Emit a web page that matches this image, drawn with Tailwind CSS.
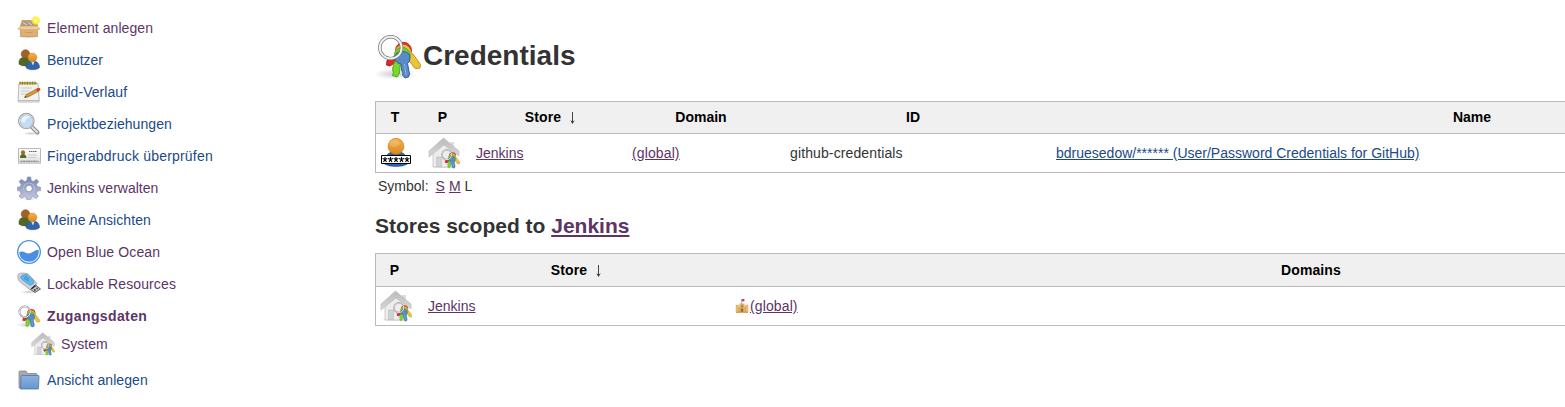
<!DOCTYPE html>
<html lang="de">
<head>
<meta charset="utf-8">
<title>Credentials [Jenkins]</title>
<script src="https://cdn.jsdelivr.net/npm/@tailwindcss/browser@4"></script>
</head>
<body class="h-[407px] overflow-hidden bg-white font-['Liberation_Sans',Arial,sans-serif] text-[14px] leading-[16px] text-[#333]">
<svg class="absolute size-0" aria-hidden="true">
  <defs>
    <linearGradient id="orange" x1="0" y1="0" x2="0" y2="1"><stop offset="0" stop-color="#f3b04c"/><stop offset="1" stop-color="#d98a1e"/></linearGradient>
    <linearGradient id="blue" x1="0" y1="0" x2="0" y2="1"><stop offset="0" stop-color="#3465a4"/><stop offset="1" stop-color="#2d66ad"/></linearGradient>
    <linearGradient id="roof" x1="0" y1="0" x2="0" y2="1"><stop offset="0" stop-color="#bbb"/><stop offset="1" stop-color="#d8d8d8"/></linearGradient>
    <linearGradient id="fold" x1="0" y1="0" x2="0" y2="1"><stop offset="0" stop-color="#8cb2df"/><stop offset="1" stop-color="#6795cc"/></linearGradient>
    <linearGradient id="card" x1="0" y1="0" x2="0" y2="1"><stop offset="0" stop-color="#fff"/><stop offset="1" stop-color="#ddd"/></linearGradient>
    <linearGradient id="gearfill" x1="0" y1="0" x2="0" y2="1"><stop offset="0" stop-color="#7184ad"/><stop offset="1" stop-color="#c9c9e0"/></linearGradient>
    <radialGradient id="shade"><stop offset="0" stop-color="#000" stop-opacity=".2"/><stop offset="1" stop-color="#000" stop-opacity="0"/></radialGradient>
    <radialGradient id="glow"><stop offset="0" stop-color="#fffbb0"/><stop offset=".6" stop-color="#fbee3c"/><stop offset="1" stop-color="#fbee3c" stop-opacity="0"/></radialGradient>
  </defs>
  <symbol id="keyring" viewBox="0 0 48 48">
    <path d="M19 25l2 5-6 4-3.500-1 .5-4.500z" fill="#dd2b2b" stroke="#a40000" stroke-width=".8"/>
    <circle cx="28.500" cy="18.300" r="8" fill="#dd3b2b" stroke="#b31414" stroke-width=".8"/>
    <path d="M32 21l6 1 7.500 10.500-.5 3.500-4 .5-2-1-2-3-5-6z" fill="#e8c53a" stroke="#b98e16" stroke-width=".9"/>
    <circle cx="28" cy="20.800" r="8" fill="#f2c53c"/>
    <circle cx="27.200" cy="23.300" r="8" fill="#6fd02c" stroke="#4b9a0c" stroke-width=".7"/>
    <path d="M20.500 28l5 2-1 11-2.500 4-4.500-1.500 1-3-1-3 1-5z" fill="#78d830" stroke="#4e9a06" stroke-width=".9"/>
    <path d="M20 26q0-6.500 7.300-6.500 7.700 0 7.700 6.500 0 4-2.500 5.500l2 10.500-1 3-3.500 1-2.500-3 .5-2-1.500-3-.5-6q-6-1-6-6z" fill="#5a8bc9" stroke="#32609c" stroke-width="1"/>
    <path d="M29.500 32l1.700 11" stroke="#8fb3de" stroke-width="1"/>
    <circle cx="15.700" cy="15.700" r="10.900" fill="none" stroke="#777" stroke-width="3.400"/>
    <circle cx="15.700" cy="15.700" r="10.900" fill="none" stroke="#f0f0f0" stroke-width="2"/>
    <path d="M20.500 13q2-1.500 4 0v6h-2z" fill="none"/>
  </symbol>
  <symbol id="keys" viewBox="0 0 48 48">
    <ellipse cx="20" cy="42" rx="21" ry="5.500" fill="url(#shade)"/>
    <use href="#keyring" width="48" height="48"/>
  </symbol>
  <symbol id="home" viewBox="0 0 32 32">
    <ellipse cx="15" cy="29.500" rx="14" ry="2" fill="url(#shade)"/>
    <path d="M5 14L16 5l10 9v16H5z" fill="#ededed" stroke="#c4c4c4" stroke-width=".8"/>
    <path d="M22 5h4v7h-4z" fill="#ddd"/>
    <path d="M8.500 20h5v9.500h-5z" fill="#d2d2d2" stroke="#bbb" stroke-width=".6"/>
    <path d="M15.500 1L31 14v5L16 8 1 20v-6z" fill="url(#roof)" stroke="#bdbdbd" stroke-width=".7"/>
    <use href="#keyring" x="12" y="11" width="21" height="21"/>
  </symbol>
  <symbol id="people" viewBox="0 0 24 24">
    <ellipse cx="15" cy="21.500" rx="7" ry="1.500" fill="url(#shade)"/>
    <path d="M2 16q-.5-6 4-6.500h5q4 1 4 6.500-1 2-6 2t-7-2z" fill="#4e6b1e" stroke="#3b5213" stroke-width=".5"/>
    <circle cx="8.500" cy="6" r="4.300" fill="#9d6426" stroke="#764817" stroke-width=".5"/>
    <path d="M9 19.500q-.5-5 4-6.500h5q4.500 1.500 4.500 6.500-1.500 2-6.700 2t-6.800-2z" fill="url(#blue)" stroke="#204a87" stroke-width=".5"/>
    <path d="M14 13h3.500l-1.500 4.500z" fill="#e8eef6"/>
    <circle cx="15.400" cy="9.500" r="4.500" fill="url(#orange)" stroke="#c27c1c" stroke-width=".4"/>
  </symbol>
  <symbol id="box" viewBox="0 0 24 24">
    <ellipse cx="11.500" cy="21" rx="10" ry="1.700" fill="url(#shade)"/>
    <path d="M5 4.500h14.500l1 6H3.500z" fill="#c99a5e" stroke="#b98a50" stroke-width=".6"/>
    <path d="M5.500 6h12v4h-12z" fill="#a39c90"/><path d="M6 6.500l4 2.500M11 6.500l4 2.500" stroke="#d8d4cc"/>
    <path d="M3.500 10h17v10.500h-17z" fill="#deb073" stroke="#c28f54" stroke-width=".7"/>
    <path d="M4 10h16l3 3-3.500.800H4L.8 13z" fill="#efcd9b" stroke="#c99b60" stroke-width=".6"/>
    <path d="M8.500 16.500h7" stroke="#c99b60"/>
    <circle cx="18.800" cy="4.500" r="5" fill="url(#glow)"/>
  </symbol>
  <symbol id="note" viewBox="0 0 24 24">
    <path d="M2 3.500h19l1.300 17.500q0 1-1 1H2q-1 0-1-1z" fill="#f1f1ef" stroke="#aaa" stroke-width=".8"/>
    <path d="M1 20.500h21" stroke="#bbb"/>
    <path d="M2.500 2h17v2.500h-17z" fill="#b5a642"/><path d="M3 1.500v3M5.500 1.500v3M8 1.500v3M10.500 1.500v3M13 1.500v3M15.500 1.500v3M18 1.500v3" stroke="#8f8130"/>
    <path d="M4 8h11M4 11h9M4 14h7" stroke="#c8c8c8" stroke-width="1"/>
    <path d="M7.500 17.500l2-3L20.500 8.500l1.500 2.500-11 6z" fill="#d59a3c" stroke="#8f5902" stroke-width=".6"/>
    <path d="M19 9.200l3-1.500q1.500.3 1.500 2.300l-3 1.700z" fill="#dc3b2b"/><path d="M7.500 17.500l1-1.500 1 1z" fill="#222"/>
  </symbol>
  <symbol id="lens" viewBox="0 0 24 24">
    <ellipse cx="14" cy="21.500" rx="8" ry="1.800" fill="url(#shade)"/>
    <path d="M14.500 14.500l6 6" stroke="#888" stroke-width="4" stroke-linecap="round"/><path d="M14.500 14.500l5.700 5.700" stroke="#ddd" stroke-width="2.200" stroke-linecap="round"/>
    <circle cx="9.300" cy="9" r="7.300" fill="#c3dcf5" stroke="#999" stroke-width="2"/>
    <circle cx="9.300" cy="9" r="6.900" fill="none" stroke="#e8e8e8" stroke-width=".9"/>
    <path d="M4 9q1-5 6-5.300 2 0 3.500 1.300Q9 6 7.500 11z" fill="#e8f3fd"/>
  </symbol>
  <symbol id="idcard" viewBox="0 0 24 24">
    <path d="M1.500 4.500h22v15h-22z" fill="url(#card)" stroke="#aaa" stroke-width=".8"/>
    <path d="M1.500 17h22v3h-22z" fill="#d0d0d0"/><path d="M3.500 17.200h18" stroke="#777" stroke-dasharray="2 .5"/>
    <path d="M3 14q0-4 3-4t3.500 4z" fill="#4e6b1e"/><circle cx="6" cy="8.400" r="2.100" fill="#a06a2b"/>
    <path d="M12 7.500h8" stroke="#666" stroke-width="1.200" stroke-dasharray="1.500 .5"/><path d="M11 11h9M11 13.500h8" stroke="#ccc"/>
  </symbol>
  <symbol id="gear" viewBox="0 0 24 24">
    <ellipse cx="12" cy="22.500" rx="9" ry="1.500" fill="url(#shade)"/>
    <path d="M10.500 1h3.200l.5 3.500 2.300 1L19.500 3.200l2.200 2.300L19.500 8.500l1 2.300 3.200.5v3.200l-3.300.6-1 2.300 2 2.900-2.200 2.100-3-1.900-2.300 1-.5 2.300h-3.200L9.600 21.500l-2.300-1-3 1.900L2 20.200l2-2.900-1-2.200-2.800-.5v-3.300l3-.5 1-2.300-2.100-3L4.400 3.200 7.500 5.500l2.400-1z" fill="url(#gearfill)" stroke="#8f95b8" stroke-width=".7"/>
    <circle cx="12" cy="12.500" r="5.500" fill="none" stroke="#b4bbd5" stroke-width="1.200"/>
    <circle cx="12" cy="12.500" r="3.300" fill="#fff" stroke="#7d8bb0" stroke-width=".8"/>
  </symbol>
  <symbol id="ocean" viewBox="0 0 24 24">
    <circle cx="12" cy="12" r="11.300" fill="#fff" stroke="#4a90e2" stroke-width="1.300"/>
    <path d="M2.300 12q3-1.200 6 .5t5.500.5 4-2.300q1.500-1 3.900-.6.3 5.900-3 9.100-2.700 2.500-6.700 2.500-4.200 0-7-2.700Q2.200 16.300 2.300 12z" fill="#4a90e2"/>
  </symbol>
  <symbol id="usb" viewBox="0 0 24 24">
    <ellipse cx="12" cy="20" rx="9" ry="2" fill="url(#shade)"/>
    <path d="M.8 3.500q0-2 3-2.300 4-.6 7.500.8L20 11.500l-6.500 6.500L2.500 9.500Q.5 7.500.8 3.500z" fill="#d0d0da" stroke="#a0a0a8" stroke-width=".8"/>
    <path d="M3.500 5Q5 2.300 10 2.500l7 6.700q0 3.500-4.500 3.800L5 7.500z" fill="#5fbaec" stroke="#3a90c8" stroke-width=".7"/>
    <path d="M8 4l4 3.500M7 6l4.500 3" stroke="#2873b5" stroke-width=".8"/>
    <path d="M13.500 17.500l5-4.500 5 4-5.500 3.500z" fill="#c0c0c0" stroke="#444" stroke-width=".8"/><path d="M14.500 16.800l4-3.300M17 18h1.500M19.500 16.500h1.200" stroke="#222" stroke-width="1.300"/>
  </symbol>
  <symbol id="folder" viewBox="0 0 24 24">
    <path d="M2 20V4q0-1 1-1h6l1.500 2.500H19q1 0 1 1V20z" fill="#aaa" stroke="#888" stroke-width=".8"/>
    <path d="M3.500 21l.5-12.500q0-1 1-1H21.500q.6 0 .5 1l-.500 12q0 .5-.7.500z" fill="url(#fold)" stroke="#4a78b3" stroke-width=".8"/>
  </symbol>
  <symbol id="secret" viewBox="0 0 32 32">
    <path d="M4.500 27q0-10 7-12h9q7 2 7 12-4 2.500-11.500 2.500T4.500 27z" fill="url(#blue)" stroke="#204a87" stroke-width=".6"/>
    <circle cx="16" cy="9.300" r="8" fill="url(#orange)" stroke="#c27c18" stroke-width=".6"/>
    <ellipse cx="14.500" cy="6.500" rx="5" ry="3.500" fill="#fff" opacity=".17"/>
    <path d="M1.500 18.500h29v8h-29z" fill="#fff" stroke="#000" stroke-width="1"/>
    <g fill="none" stroke="#000" stroke-width="1.100"><path id="ast" d="M5 20v2.500M2.600 21.500l2.400 1 2.400-1M3.500 25l1.500-2.500L6.500 25"/><use href="#ast" x="5.500"/><use href="#ast" x="11"/><use href="#ast" x="16.500"/><use href="#ast" x="22"/></g>
  </symbol>
  <symbol id="castle" viewBox="0 0 14 14">
    <path d="M6.800 0h2.600v2.400H6.800z" fill="#e0394a"/><path d="M6.500 0v5" stroke="#999" stroke-width=".7"/>
    <path d="M4.500 4.500h5v3H13v6H1v-6h3.500z" fill="#dfae60"/><path d="M1 6h2.500v7.500H1zM10.500 6H13v7.500h-2.500z" fill="#e8bd75" stroke="#d09c50" stroke-width=".4"/>
    <path d="M5.800 13v-3q1.200-1.500 2.400 0v3z" fill="#9a6d30"/><path d="M6 6.500h2V8H6z" fill="#8a7d60"/><path d="M1 13.200h12" stroke="#c99748"/>
  </symbol>
  <symbol id="down" viewBox="0 0 8 14">
    <path d="M4.500 1v11" stroke="#444" stroke-width="1"/><path d="M2.300 9.300l2.200 3.700 2.200-3.700-2.200 1.200z" fill="#333"/>
  </symbol>
</svg>

<div class="flex w-full overflow-hidden">
  <nav class="flex w-[375px] shrink-0 flex-col pt-[16px] pl-[17px] text-[#5c3566]">
    <a class="flex h-8 gap-[6px] leading-6 tracking-[0.06px]"><svg class="size-6"><use href="#box"/></svg>Element anlegen</a>
    <a class="flex h-8 gap-[6px] leading-6 text-[#204a87]"><svg class="size-6"><use href="#people"/></svg>Benutzer</a>
    <a class="flex h-8 gap-[6px] leading-6 tracking-[0.06px] text-[#204a87]"><svg class="size-6"><use href="#note"/></svg>Build-Verlauf</a>
    <a class="flex h-8 gap-[6px] leading-6 tracking-[0.06px] text-[#204a87]"><svg class="size-6"><use href="#lens"/></svg>Projektbeziehungen</a>
    <a class="flex h-8 gap-[6px] leading-6 tracking-[0.2px] text-[#204a87]"><svg class="size-6"><use href="#idcard"/></svg>Fingerabdruck überprüfen</a>
    <a class="flex h-8 gap-[6px] leading-6"><svg class="size-6"><use href="#gear"/></svg>Jenkins verwalten</a>
    <a class="flex h-8 gap-[6px] leading-6 tracking-[0.08px] text-[#204a87]"><svg class="size-6"><use href="#people"/></svg>Meine Ansichten</a>
    <a class="flex h-8 gap-[6px] leading-6 tracking-[0.12px]"><svg class="size-6"><use href="#ocean"/></svg>Open Blue Ocean</a>
    <a class="flex h-8 gap-[6px] leading-6 tracking-[0.12px]"><svg class="size-6"><use href="#usb"/></svg>Lockable Resources</a>
    <a class="flex h-7 gap-[6px] font-bold leading-6 tracking-[0.38px]"><svg class="size-6"><use href="#keys"/></svg>Zugangsdaten</a>
    <a class="flex h-9 gap-[6px] pl-[14px] leading-6"><svg class="size-6"><use href="#home"/></svg>System</a>
    <a class="flex h-8 gap-[6px] leading-6 tracking-[0.08px] text-[#204a87]"><svg class="size-6"><use href="#folder"/></svg>Ansicht anlegen</a>
  </nav>

  <main class="w-[1530px] shrink-0 pt-[32px]">
    <h1 class="flex h-[48px] items-center text-[28px] font-bold"><svg class="size-12"><use href="#keys"/></svg>Credentials</h1>

    <div class="mt-[21px] border border-[#bbb]">
      <div class="grid h-[32px] grid-cols-[48px_48px_156px_158px_266px_852px] items-center border-b border-[#bbb] bg-[#f0f0f0] pb-[1px] text-center font-bold text-black">
        <div class="pr-[10px]">T</div><div class="pr-[11px]">P</div><div class="flex items-center justify-center gap-[7px] pl-[1px] tracking-[0.1px]">Store<svg class="mt-[2px] h-[14px] w-2"><use href="#down"/></svg></div><div class="pr-[12px]">Domain</div><div class="pr-[12px]">ID</div><div class="pr-[12px]">Name</div>
      </div>
      <div class="grid h-[38px] grid-cols-[48px_48px_156px_158px_266px_852px] items-center">
        <svg class="ml-1 size-8"><use href="#secret"/></svg>
        <svg class="ml-1 size-8"><use href="#home"/></svg>
        <a class="pl-1 text-[#5c3566] underline">Jenkins</a>
        <a class="pl-1 tracking-[0.12px] text-[#5c3566] underline">(global)</a>
        <div class="pl-1 tracking-[0.12px]">github-credentials</div>
        <a class="pl-1 text-[#204a87] underline">bdruesedow/****** (User/Password Credentials for GitHub)</a>
      </div>
    </div>

    <div class="mt-[5px] flex gap-1 pl-[3px]"><span class="mr-[3px]">Symbol:</span><a class="text-[#5c3566] underline">S</a><a class="text-[#5c3566] underline">M</a><span>L</span></div>

    <h2 class="mt-[20px] text-[21px] font-bold leading-6">Stores scoped to <a class="text-[#5c3566] underline">Jenkins</a></h2>

    <div class="mt-[15px] border border-[#bbb]">
      <div class="grid h-[33px] grid-cols-[48px_308px_1172px] items-center border-b border-[#bbb] bg-[#f0f0f0] text-center font-bold text-black">
        <div class="pr-[11px]">P</div><div class="flex items-center justify-center gap-[7px] pr-[3px] tracking-[0.1px]">Store<svg class="mt-[2px] h-[14px] w-2"><use href="#down"/></svg></div><div class="pr-[14px] tracking-[0.1px]">Domains</div>
      </div>
      <div class="grid h-[38px] grid-cols-[48px_308px_1172px] items-center">
        <svg class="ml-1 size-8"><use href="#home"/></svg>
        <a class="pl-1 text-[#5c3566] underline">Jenkins</a>
        <div class="flex items-center pl-[3px]"><svg class="size-[14px]"><use href="#castle"/></svg><a class="ml-px tracking-[0.12px] text-[#5c3566] underline">(global)</a></div>
      </div>
    </div>
  </main>
</div>
</body>
</html>
